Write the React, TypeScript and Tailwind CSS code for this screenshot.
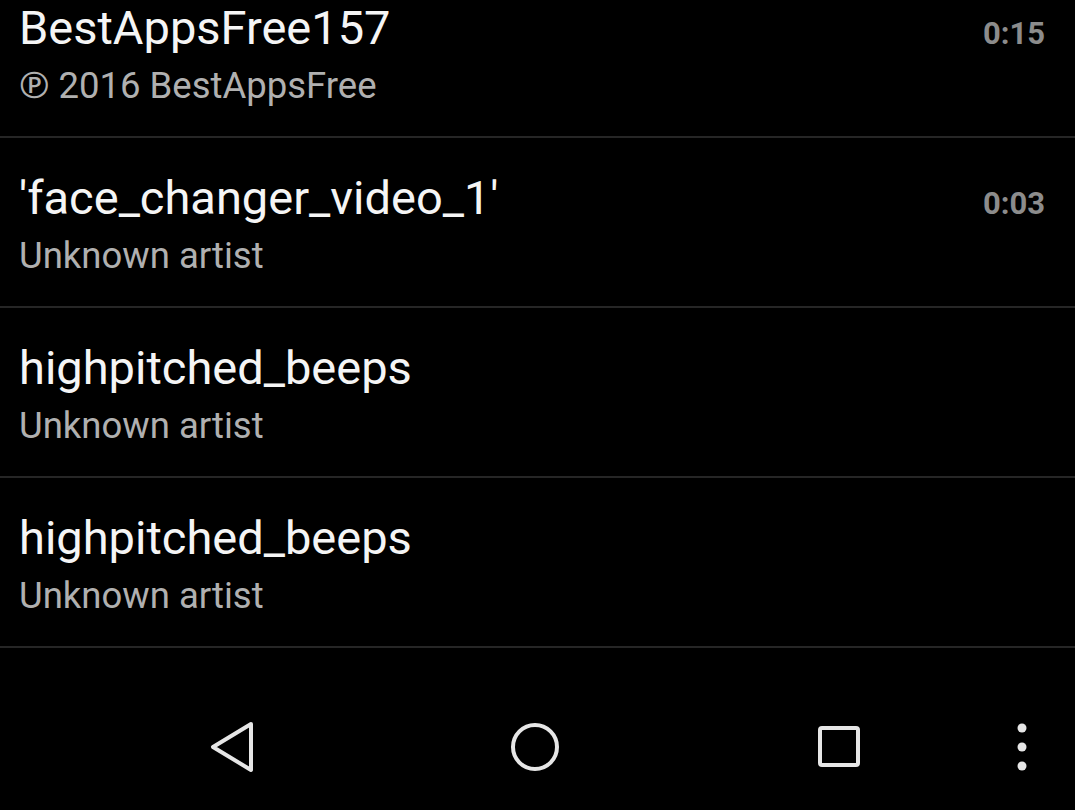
import React from "react";

interface Track {
  title: string;
  artist: string;
  time?: string;
}

const tracks: Track[] = [
  { title: "BestAppsFree157", artist: "℗ 2016 BestAppsFree", time: "0:15" },
  { title: "'face_changer_video_1'", artist: "Unknown artist", time: "0:03" },
  { title: "highpitched_beeps", artist: "Unknown artist" },
  { title: "highpitched_beeps", artist: "Unknown artist" },
];

const Row = ({ t }: { t: Track }) => (
  <div className="h-[170px] border-b-2 border-[#262626] flex items-start pl-[19px] pr-[30px] pt-[32px]">
    <div className="flex-1 flex flex-col">
      <span className="text-[47px] leading-[56px] text-[#f5f5f5] whitespace-nowrap">{t.title}</span>
      <span className="text-[36.5px] leading-[44px] text-[#b0b0b0] mt-[8px] whitespace-nowrap">{t.artist}</span>
    </div>
    {t.time && (
      <span className="text-[31px] leading-[56px] mt-[6px] font-bold text-[#8c8c8c]">{t.time}</span>
    )}
  </div>
);

export default function App() {
  return (
    <div
      className="w-[1075px] h-[810px] bg-black flex flex-col overflow-hidden"
      style={{ fontFamily: "Roboto, 'Noto Sans', sans-serif" }}
    >
      {/* LIST */}
      <div className="h-[684px] overflow-hidden">
        <div className="-mt-[32px]">
          {tracks.map((t, i) => (
            <Row key={i} t={t} />
          ))}
        </div>
      </div>

      {/* NAV BAR */}
      <div className="h-[126px] flex items-center">
        <div className="ml-[79px] w-[304px] flex justify-center">
          <svg width="48" height="56" viewBox="0 0 48 56" fill="none">
            <path d="M44 5 L6 28 L44 51 Z" stroke="#e6e6e6" strokeWidth="4" strokeLinejoin="round" />
          </svg>
        </div>
        <div className="w-[304px] flex justify-center">
          <svg width="52" height="52" viewBox="0 0 52 52" fill="none">
            <circle cx="26" cy="26" r="22" stroke="#e6e6e6" strokeWidth="4" />
          </svg>
        </div>
        <div className="w-[304px] flex justify-center">
          <svg width="46" height="46" viewBox="0 0 46 46" fill="none">
            <rect x="4" y="4" width="38" height="37" rx="2" stroke="#e6e6e6" strokeWidth="4" />
          </svg>
        </div>
        <div className="ml-[23px] w-[16px] flex justify-center">
          <svg width="16" height="48" viewBox="0 0 16 48" fill="#e6e6e6">
            <circle cx="8" cy="5" r="4.5" />
            <circle cx="8" cy="24" r="4.5" />
            <circle cx="8" cy="43" r="4.5" />
          </svg>
        </div>
      </div>
    </div>
  );
}
